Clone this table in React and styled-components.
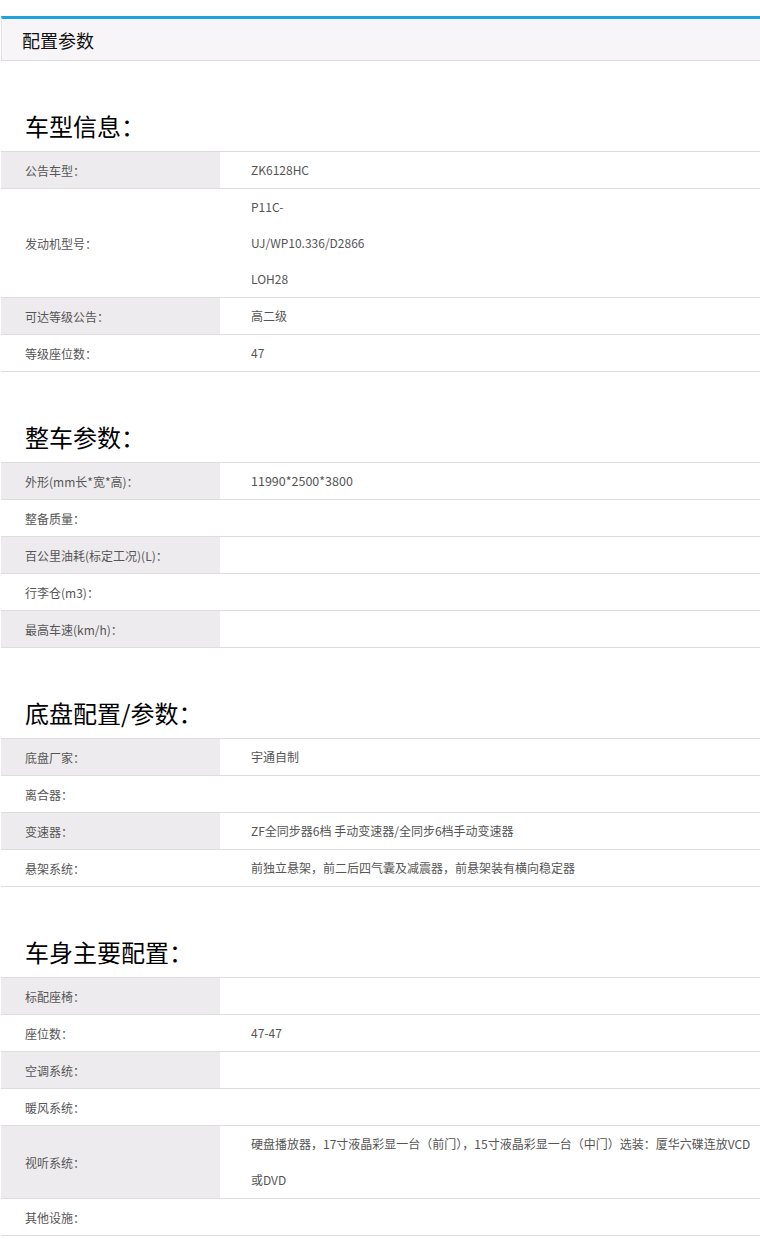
import React from 'react'
import styled, { createGlobalStyle } from 'styled-components'

const GlobalStyle = createGlobalStyle`
  html, body {
    margin: 0;
    padding: 0;
    background: #ffffff;
    overflow-x: hidden;
  }
  body {
    font-family: "Noto Sans CJK SC", "Noto Sans", sans-serif;
  }
`

const Page = styled.div`
  width: 800px;
  padding: 16px 0 0 1px;
`

const PanelHeader = styled.div`
  height: 41px;
  border-top: 3px solid #1ea3dd;
  border-left: 1px solid #e3e1e4;
  border-bottom: 1px solid #dcdcdc;
  background: #f7f5f8;
  display: flex;
  align-items: center;
  padding-left: 20px;
  font-size: 18px;
  color: #111;
`

const Section = styled.section`
  display: flex;
  flex-direction: column;
`

const SectionTitle = styled.h2`
  margin: 40px 0 0;
  height: 50px;
  line-height: 50px;
  padding-left: 24px;
  font-size: 24px;
  font-weight: 400;
  color: #000;
`

const Table = styled.div`
  display: flex;
  flex-direction: column;
  border-top: 1px solid #dddddd;
`

const Row = styled.div`
  display: flex;
  border-bottom: 1px solid #dddddd;
`

const Label = styled.div`
  width: 219px;
  flex-shrink: 0;
  display: flex;
  align-items: center;
  padding-left: 24px;
  box-sizing: border-box;
  font-size: 12px;
  color: #555;
  background: ${p => (p.$shaded ? '#eeebee' : '#ffffff')};
`

const Value = styled.div`
  flex: 1;
  padding-left: 31px;
  font-size: ${p => (p.$large ? '12.5px' : '12px')};
  color: #555;
  line-height: 36px;
  white-space: nowrap;
`

const Line = styled.div`
  height: 36px;
`

const sections = [
  {
    title: '车型信息：',
    rows: [
      ['公告车型：', ['ZK6128HC']],
      ['发动机型号：', ['P11C-', 'UJ/WP10.336/D2866', 'LOH28']],
      ['可达等级公告：', ['高二级']],
      ['等级座位数：', ['47']],
    ],
  },
  {
    title: '整车参数：',
    rows: [
      ['外形(mm长*宽*高)：', ['11990*2500*3800'], true],
      ['整备质量：', []],
      ['百公里油耗(标定工况)(L)：', []],
      ['行李仓(m3)：', []],
      ['最高车速(km/h)：', []],
    ],
  },
  {
    title: '底盘配置/参数：',
    rows: [
      ['底盘厂家：', ['宇通自制']],
      ['离合器：', []],
      ['变速器：', ['ZF全同步器6档 手动变速器/全同步6档手动变速器']],
      ['悬架系统：', ['前独立悬架，前二后四气囊及减震器，前悬架装有横向稳定器']],
    ],
  },
  {
    title: '车身主要配置：',
    rows: [
      ['标配座椅：', []],
      ['座位数：', ['47-47']],
      ['空调系统：', []],
      ['暖风系统：', []],
      ['视听系统：', ['硬盘播放器，17寸液晶彩显一台（前门），15寸液晶彩显一台（中门）选装：厦华六碟连放VCD', '或DVD']],
      ['其他设施：', []],
    ],
  },
]

const App = () => {
  return (
    <Page>
      <GlobalStyle />
      <PanelHeader>配置参数</PanelHeader>
      {sections.map(section => (
        <Section key={section.title}>
          <SectionTitle>{section.title}</SectionTitle>
          <Table>
            {section.rows.map(([label, lines, large], i) => (
              <Row key={label}>
                <Label $shaded={i % 2 === 0}>{label}</Label>
                <Value $large={large}>
                  {lines.length === 0 ? <Line /> : lines.map(line => <Line key={line}>{line}</Line>)}
                </Value>
              </Row>
            ))}
          </Table>
        </Section>
      ))}
    </Page>
  )
}

export default App
